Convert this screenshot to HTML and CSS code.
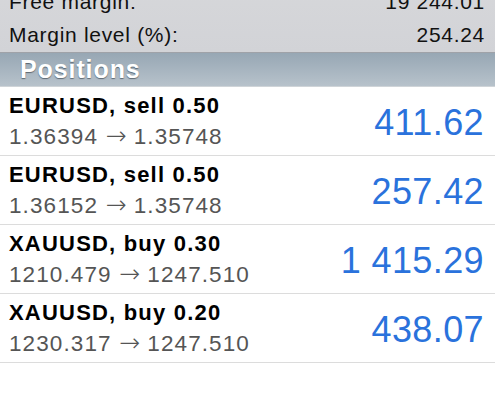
FILE: index.html
```html
<!DOCTYPE html>
<html>
  <head>
    <title>Trade</title>
    <meta name="viewport" content="width=device-width, initial-scale=1.0" />
    <link rel="stylesheet" href="styles.css">
  </head>
  <body>
    <div class="summary">
      <div class="summary-row">
        <span>Free margin:</span>
        <span>19 244.01</span>
      </div>
      <div class="summary-row">
        <span>Margin level (%):</span>
        <span>254.24</span>
      </div>
    </div>

    <div class="section-header">Positions</div>

    <div class="positions">
      <div class="position">
        <div class="position-info">
          <div class="position-title">EURUSD, sell 0.50</div>
          <div class="position-prices">1.36394 <span class="arrow">&rarr;</span> 1.35748</div>
        </div>
        <div class="position-profit">411.62</div>
      </div>
      <div class="position">
        <div class="position-info">
          <div class="position-title">EURUSD, sell 0.50</div>
          <div class="position-prices">1.36152 <span class="arrow">&rarr;</span> 1.35748</div>
        </div>
        <div class="position-profit">257.42</div>
      </div>
      <div class="position">
        <div class="position-info">
          <div class="position-title">XAUUSD, buy 0.30</div>
          <div class="position-prices">1210.479 <span class="arrow">&rarr;</span> 1247.510</div>
        </div>
        <div class="position-profit">1 415.29</div>
      </div>
      <div class="position">
        <div class="position-info">
          <div class="position-title">XAUUSD, buy 0.20</div>
          <div class="position-prices">1230.317 <span class="arrow">&rarr;</span> 1247.510</div>
        </div>
        <div class="position-profit">438.07</div>
      </div>
    </div>
  </body>
</html>
```

FILE: styles.css
```css
* {
  box-sizing: border-box;
}

html,
body {
  margin: 0;
  padding: 0;
  background: #ffffff;
  height: 100%;
  overflow: hidden;
}

body {
  font-family: "Liberation Sans", Arial, sans-serif;
  color: #111111;
}

.summary {
  margin-top: -15px; /* list is scrolled */
  padding: 0 10px 1px 9px;
  background: linear-gradient(#d6d7da, #d2d3d7);
  border-bottom: 1px solid #9fa2a8;
}

.summary-row {
  display: flex;
  justify-content: space-between;
  height: 33px;
  line-height: 33px;
  font-size: 21px;
  letter-spacing: 0.7px;
}

.section-header {
  height: 34px;
  line-height: 33px;
  padding-left: 20px;
  font-size: 25px;
  font-weight: bold;
  letter-spacing: 0.9px;
  color: #ffffff;
  text-shadow: 0 1px 1px rgba(60, 70, 80, 0.7);
  background: linear-gradient(#97a7b4, #b7c2cb);
  border-bottom: 1px solid #cfd4d8;
}

.position {
  display: flex;
  align-items: center;
  justify-content: space-between;
  height: 69px;
  padding: 5px 11px 2px 9px;
  border-bottom: 1px solid #dcdcdc;
}

.position-info {
  align-self: flex-start;
}

.position-title {
  font-size: 22px;
  font-weight: bold;
  line-height: 27px;
  letter-spacing: 1.2px;
  color: #000000;
}

.position-prices {
  font-size: 22.5px;
  line-height: 34px;
  letter-spacing: 1.1px;
  color: #555555;
}

.arrow {
  font-family: "DejaVu Sans", sans-serif;
  font-size: 25px;
  font-weight: 300;
  letter-spacing: 0;
}

.position-profit {
  font-size: 36px;
  letter-spacing: 0.4px;
  color: #2a72dc;
}
```
